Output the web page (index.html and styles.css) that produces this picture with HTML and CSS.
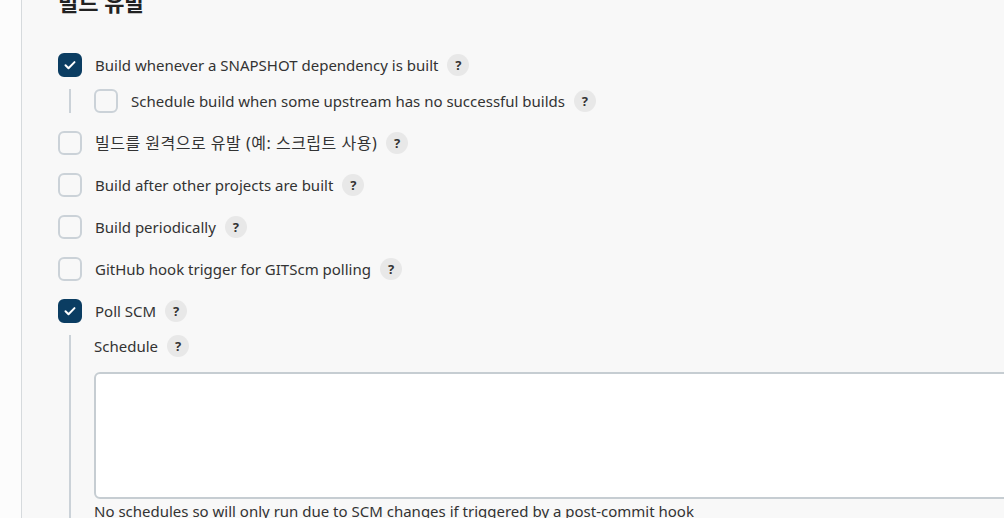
FILE: index.html
```html
<!DOCTYPE html>
<html lang="ko">
<head>
<meta charset="utf-8">
<link rel="stylesheet" href="styles.css">
</head>
<body>
<div class="page">
  <aside class="side"></aside>
  <main class="main">
    <h2 class="title">빌드 유발</h2>
    <div class="options">
      <div class="opt">
        <div class="row">
          <span class="cb checked"><svg viewBox="0 0 24 24" width="24" height="24"><path d="M7.5 12.3l3 3 6-6.2" fill="none" stroke="#fff" stroke-width="2" stroke-linecap="round" stroke-linejoin="round"/></svg></span>
          <span class="label">Build whenever a SNAPSHOT dependency is built</span>
          <span class="help">?</span>
        </div>
        <div class="nested sub">
          <div class="row">
            <span class="cb"></span>
            <span class="label">Schedule build when some upstream has no successful builds</span>
            <span class="help">?</span>
          </div>
        </div>
      </div>
      <div class="opt">
        <div class="row">
          <span class="cb"></span>
          <span class="label ko">빌드를 원격으로 유발 (예: 스크립트 사용)</span>
          <span class="help">?</span>
        </div>
      </div>
      <div class="opt">
        <div class="row">
          <span class="cb"></span>
          <span class="label">Build after other projects are built</span>
          <span class="help">?</span>
        </div>
      </div>
      <div class="opt">
        <div class="row">
          <span class="cb"></span>
          <span class="label">Build periodically</span>
          <span class="help">?</span>
        </div>
      </div>
      <div class="opt">
        <div class="row">
          <span class="cb"></span>
          <span class="label">GitHub hook trigger for GITScm polling</span>
          <span class="help">?</span>
        </div>
      </div>
      <div class="opt">
        <div class="row">
          <span class="cb checked"><svg viewBox="0 0 24 24" width="24" height="24"><path d="M7.5 12.3l3 3 6-6.2" fill="none" stroke="#fff" stroke-width="2" stroke-linecap="round" stroke-linejoin="round"/></svg></span>
          <span class="label">Poll SCM</span>
          <span class="help">?</span>
        </div>
        <div class="nested poll">
          <div class="field-label">
            <span class="label">Schedule</span>
            <span class="help">?</span>
          </div>
          <textarea class="area"></textarea>
          <div class="hint">No schedules so will only run due to SCM changes if triggered by a post-commit hook</div>
        </div>
      </div>
    </div>
  </main>
</div>
</body>
</html>
```
FILE: styles.css
```css
html, body {
  margin: 0;
  padding: 0;
  height: 100%;
  overflow: hidden;
}
body {
  font-family: "Noto Sans", "Noto Sans CJK KR", sans-serif;
  color: #333;
  background: #f8f8f8;
}
.page {
  display: flex;
  height: 518px;
}
.side {
  width: 21px;
  flex: none;
  background: #fcfcfc;
  border-right: 1px solid #d6dadd;
}
.main {
  flex: 1;
  padding-left: 36px;
  min-width: 0;
}
.title {
  margin: -13px 0 0 0;
  font-size: 22px;
  font-weight: 600;
  line-height: 30px;
  color: #222;
}
.options {
  margin-top: 36px;
  display: flex;
  flex-direction: column;
  gap: 18px;
}
.row {
  display: flex;
  align-items: center;
  height: 24px;
}
.cb {
  width: 24px;
  height: 24px;
  box-sizing: border-box;
  border: 2px solid #cbd2d8;
  border-radius: 6px;
  flex: none;
  margin-right: 13px;
  display: flex;
}
.cb.checked {
  background: #0b3d62;
  border-color: #0b3d62;
}
.cb svg {
  margin: -2px;
}
.label {
  font-size: 15px;
  line-height: 20px;
  color: #333;
  white-space: nowrap;
}
.label.ko {
  font-size: 16px;
  letter-spacing: 0.5px;
}
.help {
  width: 22px;
  height: 22px;
  border-radius: 50%;
  background: #e8e8e8;
  color: #333;
  font-size: 13px;
  font-weight: 700;
  display: flex;
  align-items: center;
  justify-content: center;
  margin-left: 9px;
  flex: none;
}
.nested {
  margin-left: 11px;
  border-left: 2px solid #cbd2d8;
}
.sub {
  margin-top: 12px;
  padding-left: 23px;
}
.poll {
  margin-top: 12px;
  padding-left: 23px;
  padding-bottom: 40px;
}
.field-label {
  display: flex;
  align-items: center;
  height: 22px;
}
.area {
  display: block;
  box-sizing: border-box;
  width: 940px;
  height: 127px;
  margin-top: 15px;
  border: 2px solid #c6cdd2;
  border-radius: 6px;
  background: #fff;
  resize: none;
  padding: 8px;
  font-family: inherit;
}
.hint {
  font-size: 15px;
  line-height: 20px;
  margin-top: 2px;
  color: #333;
}
```
